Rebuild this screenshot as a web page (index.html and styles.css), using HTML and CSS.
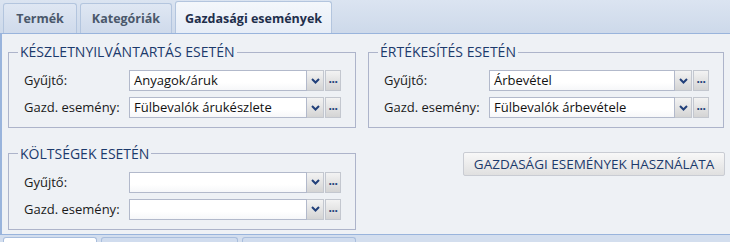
FILE: index.html
```html
<!DOCTYPE html>
<html lang="hu">
<head>
  <meta charset="UTF-8" />
  <title>Gazdasági események</title>
  <link rel="stylesheet" href="styles.css">
</head>
<body>

<div class="tabbar">
  <div class="tab tab-termek">Termék</div>
  <div class="tab tab-kat">Kategóriák</div>
  <div class="tab tab-gazd active">Gazdasági események</div>
</div>

<div class="content">
  <fieldset class="group">
    <legend>KÉSZLETNYILVÁNTARTÁS ESETÉN</legend>
    <div class="row">
      <label>Gyűjtő:</label>
      <div class="combo">Anyagok/áruk</div>
      <div class="drop"><svg viewBox="0 0 9 6"><path d="M1 1l3.5 3.5L8 1"/></svg></div>
      <div class="more">...</div>
    </div>
    <div class="row">
      <label>Gazd. esemény:</label>
      <div class="combo">Fülbevalók árukészlete</div>
      <div class="drop"><svg viewBox="0 0 9 6"><path d="M1 1l3.5 3.5L8 1"/></svg></div>
      <div class="more">...</div>
    </div>
  </fieldset>

  <fieldset class="group">
    <legend>ÉRTÉKESÍTÉS ESETÉN</legend>
    <div class="row">
      <label>Gyűjtő:</label>
      <div class="combo">Árbevétel</div>
      <div class="drop"><svg viewBox="0 0 9 6"><path d="M1 1l3.5 3.5L8 1"/></svg></div>
      <div class="more">...</div>
    </div>
    <div class="row">
      <label>Gazd. esemény:</label>
      <div class="combo">Fülbevalók árbevétele</div>
      <div class="drop"><svg viewBox="0 0 9 6"><path d="M1 1l3.5 3.5L8 1"/></svg></div>
      <div class="more">...</div>
    </div>
  </fieldset>

  <fieldset class="group">
    <legend>KÖLTSÉGEK ESETÉN</legend>
    <div class="row">
      <label>Gyűjtő:</label>
      <div class="combo"></div>
      <div class="drop"><svg viewBox="0 0 9 6"><path d="M1 1l3.5 3.5L8 1"/></svg></div>
      <div class="more">...</div>
    </div>
    <div class="row">
      <label>Gazd. esemény:</label>
      <div class="combo"></div>
      <div class="drop"><svg viewBox="0 0 9 6"><path d="M1 1l3.5 3.5L8 1"/></svg></div>
      <div class="more">...</div>
    </div>
  </fieldset>

  <div class="actions">
    <button type="button" class="use-btn">GAZDASÁGI ESEMÉNYEK HASZNÁLATA</button>
  </div>
</div>

<div class="bottombar">
  <div class="btab first"></div>
  <div class="btab second"></div>
  <div class="btab third"></div>
</div>

</body>
</html>
```

FILE: styles.css
```css
body {
  margin: 0;
  width: 730px;
  height: 242px;
  overflow: hidden;
  font-family: "Open Sans", "DejaVu Sans", sans-serif;
  background: #d3deee;
}

/* top tabs */
.tabbar {
  height: 34px;
  display: flex;
  align-items: flex-end;
  gap: 3px;
  padding-left: 3px;
  box-sizing: border-box;
  background: linear-gradient(#dbe4f1, #cdd9ea);
  border-bottom: 1px solid #99b4dc;
}

.tab {
  height: 30px;
  box-sizing: border-box;
  display: flex;
  align-items: center;
  justify-content: center;
  border: 1px solid #b3c5de;
  border-bottom: none;
  border-radius: 3px 3px 0 0;
  background: linear-gradient(#dfe7f3, #cfdaeb);
  font-size: 12.5px;
  font-weight: bold;
  color: #4a586b;
}

.tab-termek { width: 74px; }
.tab-kat { width: 92px; }
.tab-gazd { width: 157px; }

.tab.active {
  height: 32px;
  padding-top: 2px;
  background: linear-gradient(#f4f7fb, #e6edf7);
  color: #1f2f4c;
}

/* content area */
.content {
  height: 200px;
  box-sizing: border-box;
  background: #eef1f5;
  border-left: 2px solid #99b4dc;
  padding: 10px 6px 0 6px;
  display: grid;
  grid-template-columns: 348px 356px;
  grid-template-rows: auto auto;
  column-gap: 12px;
  row-gap: 13px;
  align-items: start;
}

.group {
  margin: 0;
  padding: 10px 14px 9px 15px;
  min-width: 0;
  border: 1px solid #adb4ca;
}

.group legend {
  margin-left: -6px;
  padding: 0 2px;
  font-size: 14px;
  line-height: 16px;
  color: #1c3a6c;
}

.row {
  display: grid;
  grid-template-columns: 105px 1fr 17px 17px;
  height: 21px;
  align-items: stretch;
}

.row + .row {
  margin-top: 6px;
}

.row label {
  font-size: 13px;
  line-height: 21px;
  color: #1a1a1a;
}

.combo {
  border: 1px solid #b2b9cb;
  background: linear-gradient(#ffffff 60%, #f6f7f9);
  font-size: 13px;
  line-height: 19px;
  padding-left: 4px;
  color: #111;
  white-space: nowrap;
  overflow: hidden;
}

.drop,
.more {
  border: 1px solid #c3c7cf;
  border-left: none;
  background: linear-gradient(#f3f3f3, #d4d4d4);
  display: flex;
  align-items: center;
  justify-content: center;
}

.more {
  margin-left: 1px;
  border-left: 1px solid #c3c7cf;
  font-size: 12px;
  font-weight: bold;
  letter-spacing: -0.5px;
  color: #22407a;
  line-height: 10px;
  padding-bottom: 3px;
  box-sizing: border-box;
}

.drop svg {
  width: 9px;
  height: 6px;
  fill: none;
  stroke: #22407a;
  stroke-width: 2;
}

/* button */
.actions {
  display: flex;
  justify-content: flex-end;
  padding-top: 6px;
}

.use-btn {
  height: 24px;
  width: 262px;
  border: 1px solid #c9ccd3;
  border-radius: 2px;
  background: linear-gradient(#f8f8f8, #e0e0e0);
  font-family: "Open Sans", "DejaVu Sans", sans-serif;
  font-size: 13.5px;
  color: #1c3a6c;
  padding: 0;
  margin-right: -1px;
}

/* bottom tabs */
.bottombar {
  height: 8px;
  display: flex;
  gap: 4px;
  padding: 2px 0 0 3px;
  border-top: 1px solid #99b4dc;
  background: #d3deee;
}

.btab {
  border: 1px solid #a9bedd;
  border-bottom: none;
  border-radius: 3px 3px 0 0;
  background: #d0dcee;
}

.btab.first { width: 92px; background: #ffffff; }
.btab.second { width: 135px; }
.btab.third { width: 112px; }
```
